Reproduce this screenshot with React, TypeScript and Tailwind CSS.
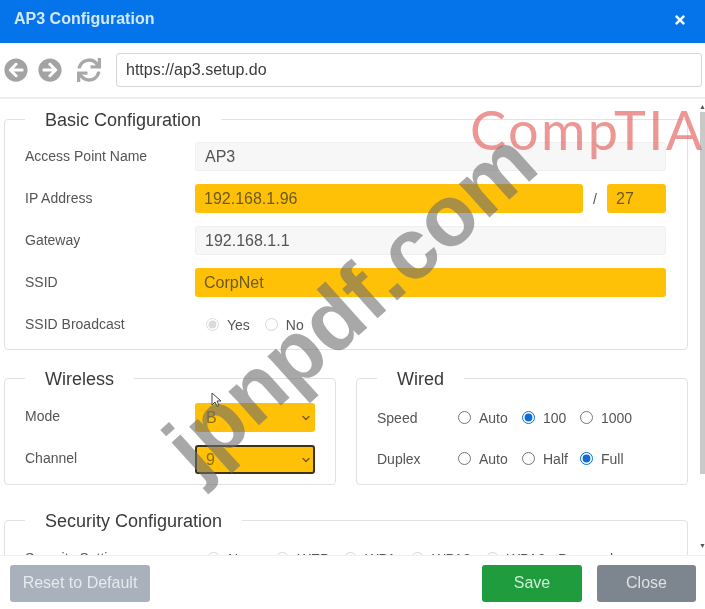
import React from 'react';
import { FaArrowCircleLeft, FaArrowCircleRight, FaSync, FaTimes } from 'react-icons/fa';
import { ChevronDown } from 'lucide-react';

function Section({ title, className, children }: { title: string; className?: string; children: React.ReactNode }) {
  return (
    <fieldset className={`min-w-0 rounded border border-[#e2e2e2] ${className ?? ''}`}>
      <legend className="translate-y-px px-5 text-lg leading-7 text-[#3a3a3a]">{title}</legend>
      {children}
    </fieldset>
  );
}

function Field({ label, value, hi, className }: { label: string; value: string; hi?: boolean; className?: string }) {
  return (
    <input
      aria-label={label}
      readOnly
      defaultValue={value}
      className={`h-[29px] rounded-[3px] px-[9px] text-base outline-none ${
        hi ? 'bg-[#ffc107] text-[#6b5a20]' : 'border border-[#efefef] bg-[#f7f7f7] text-[#555]'
      } ${className ?? ''}`}
    />
  );
}

function Row({ label, children, className, labelClass }: { label: string; children: React.ReactNode; className?: string; labelClass?: string }) {
  return (
    <div className={`flex items-center ${className ?? ''}`}>
      <span className={`w-[170px] shrink-0 text-sm text-[#555] ${labelClass ?? 'pb-[2px]'}`}>{label}</span>
      {children}
    </div>
  );
}

function Radio({ label, checked, muted, className }: { label: string; checked?: boolean; muted?: boolean; className?: string }) {
  return (
    <label className={`flex items-center gap-[8px] text-sm text-[#555] ${className ?? ''}`}>
      <input
        type="radio"
        readOnly
        checked={!!checked}
        className={`m-0 size-[13px] ${muted ? 'accent-[#888] opacity-30' : 'accent-[#0b6fd8]'}`}
      />
      {label}
    </label>
  );
}

function Pick({ value, focus }: { value: string; focus?: boolean }) {
  return (
    <div
      className={`flex h-[29px] w-[120px] items-center justify-between rounded-[3px] bg-[#ffc107] text-base text-[#8a6d1a] ${
        focus ? 'border-2 border-[#3d3216] pl-[9px] pr-[1px]' : 'pl-[11px] pr-[3px]'
      }`}
    >
      {value}
      <ChevronDown className="size-3 text-[#7a5c10]" strokeWidth={3} />
    </div>
  );
}

export default function App() {
  return (
    <div className="relative flex h-[609px] w-[705px] flex-col overflow-hidden bg-white blur-[0.4px] font-['Liberation_Sans',sans-serif]">
      <header className="flex h-[43px] shrink-0 items-center justify-between bg-[#0573ea] pb-[6px] pl-[14px] pr-[18px]">
        <h1 className="text-base font-bold text-[#d3e8fb]">AP3 Configuration</h1>
        <FaTimes className="mt-[2px] size-[14px] text-[#eef6fe]" />
      </header>

      <div className="flex h-[56px] shrink-0 items-center border-b-2 border-[#ececec] pl-1 pr-[3px]">
        <FaArrowCircleLeft className="size-6 text-[#a3a3a3]" />
        <FaArrowCircleRight className="ml-[10px] size-6 text-[#a3a3a3]" />
        <FaSync className="ml-[15px] size-6 text-[#a8a8a8]" />
        <div className="ml-[15px] flex h-[34px] flex-1 items-center rounded-[3px] border border-[#d6d6d6] px-[9px] text-base text-[#3c3c3c]">
          https://ap3.setup.do
        </div>
      </div>

      <div className="relative min-h-0 flex-1 overflow-hidden pl-1 pr-[17px] pt-[6px]">
        <Section title="Basic Configuration" className="h-[245px] pl-5 pr-[21px] pt-[9px]">
          <div className="flex flex-col gap-[13px]">
            <Row label="Access Point Name">
              <Field label="Access Point Name" value="AP3" className="w-0 flex-1" />
            </Row>
            <Row label="IP Address">
              <Field label="IP Address" value="192.168.1.96" hi className="w-[388px]" />
              <span className="w-[24px] text-center text-sm text-[#555]">/</span>
              <Field label="Prefix" value="27" hi className="w-0 flex-1" />
            </Row>
            <Row label="Gateway">
              <Field label="Gateway" value="192.168.1.1" className="w-0 flex-1" />
            </Row>
            <Row label="SSID">
              <Field label="SSID" value="CorpNet" hi className="w-0 flex-1" />
            </Row>
            <Row label="SSID Broadcast" className="h-[29px]">
              <div className="ml-[11px] flex gap-[15px]">
                <Radio label="Yes" checked muted />
                <Radio label="No" muted />
              </div>
            </Row>
          </div>
        </Section>

        <div className="mt-[14px] flex gap-5">
          <Section title="Wireless" className="h-[121px] w-[332px] px-5 pt-[11px]">
            <div className="flex flex-col gap-[13px]">
              <Row label="Mode" labelClass="pb-[4px]"><Pick value="B" /></Row>
              <Row label="Channel" labelClass="pb-[4px]"><Pick value="9" focus /></Row>
            </div>
          </Section>
          <Section title="Wired" className="h-[121px] flex-1 px-5 pt-[11px]">
            <div className="flex flex-col gap-[12px]">
              <div className="flex h-[29px] items-center">
                <span className="w-[81px] text-sm text-[#555]">Speed</span>
                <Radio label="Auto" className="w-[64px]" />
                <Radio label="100" checked className="w-[58px]" />
                <Radio label="1000" />
              </div>
              <div className="flex h-[29px] items-center">
                <span className="w-[81px] text-sm text-[#555]">Duplex</span>
                <Radio label="Auto" className="w-[64px]" />
                <Radio label="Half" className="w-[58px]" />
                <Radio label="Full" checked />
              </div>
            </div>
          </Section>
        </div>

        <Section title="Security Configuration" className="mt-[21px] h-[120px] px-5 pt-[10px]">
          <Row label="Security Setting" className="h-[29px]">
            <div className="ml-[12px] flex gap-[15px]">
              <Radio label="None" muted />
              <Radio label="WEP" muted />
              <Radio label="WPA" muted />
              <Radio label="WPA2" muted />
              <Radio label="WPA2 - Personal" muted />
            </div>
          </Row>
        </Section>

        {/* scrollbar */}
        <div className="absolute inset-y-0 right-0 flex w-[5px] flex-col items-center bg-white">
          <span className="mt-[4px] text-[7px] leading-none text-[#555]">▲</span>
          <div className="mt-[2px] h-[362px] w-full bg-[#c9c9c9]" />
          <span className="mt-auto mb-[6px] text-[7px] leading-none text-[#555]">▼</span>
        </div>
      </div>

      <footer className="flex h-[54px] shrink-0 items-center justify-between border-t border-[#f0f0f0] bg-white pl-[10px] pr-[9px] pt-[1px]">
        <button className="h-[37px] w-[140px] rounded-[3px] bg-[#a9b1bd] text-base text-[#e6eaee]">Reset to Default</button>
        <div className="flex gap-[15px]">
          <button className="h-[37px] w-[100px] rounded-[3px] bg-[#1f9c3e] text-base text-[#cdeed5]">Save</button>
          <button className="h-[37px] w-[99px] rounded-[3px] bg-[#7d868e] text-base text-[#dde1e4]">Close</button>
        </div>
      </footer>

      {/* mouse cursor */}
      <svg viewBox="0 0 12 16" className="pointer-events-none absolute left-[211px] top-[392px] h-4 w-3">
        <path d="M1 1v12l3-3 2 4.5 2-1-2-4.5h4z" fill="#fff" stroke="#444" strokeWidth="1" />
      </svg>

      {/* watermarks */}
      <div className="pointer-events-none absolute left-[470px] top-[94px] text-[54px] leading-[72px] tracking-[2.4px] whitespace-nowrap text-[#e66a6a]/70 font-['Lato',sans-serif]">
        CompTIA
      </div>
      <div className="pointer-events-none absolute left-[118px] top-[260px] origin-center -rotate-[42deg] text-[86px] font-bold leading-none whitespace-nowrap text-[#6e6e6e]/60">
        jpnpdf.com
      </div>
    </div>
  );
}
